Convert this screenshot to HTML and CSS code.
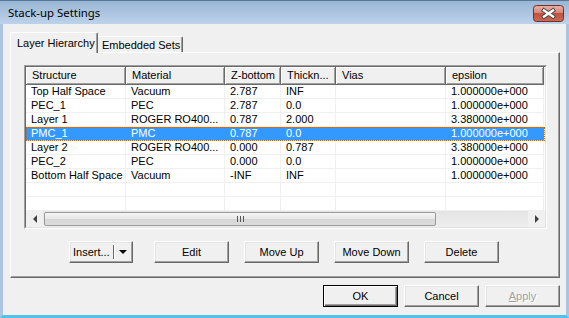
FILE: index.html
```html
<!DOCTYPE html>
<html lang="en">
<head>
    <meta charset="UTF-8">
    <title>Stack-up Settings</title>
    <link rel="stylesheet" href="styles.css">
</head>
<body>
    <div class="window">
        <div class="titlebar">
            <span class="title">Stack-up Settings</span>
            <button class="close-btn" aria-label="Close">
                <svg width="31" height="17" viewBox="0 0 31 17">
                    <defs>
                        <linearGradient id="closeGrad" x1="0" y1="0" x2="0" y2="1">
                            <stop offset="0" stop-color="#eab0a4"/>
                            <stop offset="0.45" stop-color="#d8887a"/>
                            <stop offset="0.5" stop-color="#c4513d"/>
                            <stop offset="1" stop-color="#cd6a55"/>
                        </linearGradient>
                    </defs>
                    <rect x="0.5" y="0.5" width="30" height="16" rx="3" fill="url(#closeGrad)" stroke="#6f3229"/>
                    <path d="M11 5.5 L20 11.5 M20 5.5 L11 11.5" stroke="#4a4a4a" stroke-width="4.4" stroke-linecap="square"/>
                    <path d="M11 5.5 L20 11.5 M20 5.5 L11 11.5" stroke="#ffffff" stroke-width="2.4" stroke-linecap="square"/>
                </svg>
            </button>
        </div>

        <div class="frame">
            <div class="tabs">
                <div class="tab active">Layer Hierarchy</div>
                <div class="tab">Embedded Sets</div>
            </div>

            <div class="tab-panel">
                <div class="listview">
                    <div class="list-inner">
                        <div class="list-header">
                            <div class="hcell">Structure</div>
                            <div class="hcell">Material</div>
                            <div class="hcell">Z-bottom</div>
                            <div class="hcell">Thickn...</div>
                            <div class="hcell">Vias</div>
                            <div class="hcell">epsilon</div>
                        </div>

                        <div class="row">
                            <div class="cell">Top Half Space</div>
                            <div class="cell">Vacuum</div>
                            <div class="cell">2.787</div>
                            <div class="cell">INF</div>
                            <div class="cell"></div>
                            <div class="cell">1.000000e+000</div>
                        </div>
                        <div class="row">
                            <div class="cell">PEC_1</div>
                            <div class="cell">PEC</div>
                            <div class="cell">2.787</div>
                            <div class="cell">0.0</div>
                            <div class="cell"></div>
                            <div class="cell">1.000000e+000</div>
                        </div>
                        <div class="row">
                            <div class="cell">Layer 1</div>
                            <div class="cell">ROGER RO400...</div>
                            <div class="cell">0.787</div>
                            <div class="cell">2.000</div>
                            <div class="cell"></div>
                            <div class="cell">3.380000e+000</div>
                        </div>
                        <div class="row selected">
                            <div class="cell">PMC_1</div>
                            <div class="cell">PMC</div>
                            <div class="cell">0.787</div>
                            <div class="cell">0.0</div>
                            <div class="cell"></div>
                            <div class="cell">1.000000e+000</div>
                        </div>
                        <div class="row">
                            <div class="cell">Layer 2</div>
                            <div class="cell">ROGER RO400...</div>
                            <div class="cell">0.000</div>
                            <div class="cell">0.787</div>
                            <div class="cell"></div>
                            <div class="cell">3.380000e+000</div>
                        </div>
                        <div class="row">
                            <div class="cell">PEC_2</div>
                            <div class="cell">PEC</div>
                            <div class="cell">0.000</div>
                            <div class="cell">0.0</div>
                            <div class="cell"></div>
                            <div class="cell">1.000000e+000</div>
                        </div>
                        <div class="row">
                            <div class="cell">Bottom Half Space</div>
                            <div class="cell">Vacuum</div>
                            <div class="cell">-INF</div>
                            <div class="cell">INF</div>
                            <div class="cell"></div>
                            <div class="cell">1.000000e+000</div>
                        </div>
                        <div class="row">
                            <div class="cell"></div><div class="cell"></div><div class="cell"></div>
                            <div class="cell"></div><div class="cell"></div><div class="cell"></div>
                        </div>
                        <div class="row">
                            <div class="cell"></div><div class="cell"></div><div class="cell"></div>
                            <div class="cell"></div><div class="cell"></div><div class="cell"></div>
                        </div>

                        <div class="hscroll">
                            <div class="scroll-btn"><span class="arrow-left"></span></div>
                            <div class="track">
                                <div class="thumb"><span class="grip"></span></div>
                            </div>
                            <div class="scroll-btn"><span class="arrow-right"></span></div>
                        </div>
                    </div>
                </div>

                <div class="actions">
                    <button class="btn split">
                        <span class="split-label">Insert...</span>
                        <span class="split-sep"></span>
                        <span class="split-arrow"></span>
                    </button>
                    <button class="btn">Edit</button>
                    <button class="btn">Move Up</button>
                    <button class="btn">Move Down</button>
                    <button class="btn">Delete</button>
                </div>
            </div>

            <div class="dialog-buttons">
                <button class="btn default">OK</button>
                <button class="btn">Cancel</button>
                <button class="btn disabled"><span><u>A</u>pply</span></button>
            </div>
        </div>
    </div>
</body>
</html>
```

FILE: styles.css
```css
body {
    margin: 0;
    font-family: "Liberation Sans", Arial, sans-serif;
    font-size: 11px;
    color: #000;
    background: #f0f0f0;
}

.window {
    width: 569px;
    height: 318px;
    display: flex;
    flex-direction: column;
    background: #f0f0f0;
}

/* title bar */
.titlebar {
    height: 24px;
    box-sizing: border-box;
    border-top: 1px solid #5b7796;
    background: linear-gradient(#9ab6d5, #bcd2ea);
    display: flex;
    align-items: flex-start;
    justify-content: space-between;
    padding: 0 5px 0 8px;
}

.title {
    font-family: "Noto Sans", sans-serif;
    font-size: 11.4px;
    line-height: 16px;
    margin-top: 4px;
}

.close-btn {
    margin-top: 4px;
    padding: 0;
    border: none;
    background: none;
    width: 31px;
    height: 17px;
}

.close-btn svg {
    display: block;
}

/* client frame */
.frame {
    flex: 1;
    display: flex;
    flex-direction: column;
    border-style: solid;
    border-width: 0 3px 3px 3px;
    border-color: #a9c5e3 #a9c5e3 #4fc3ea #a9c5e3;
    padding: 8px 6px 8px 7px;
}

/* tabs */
.tabs {
    display: flex;
    align-items: flex-end;
    height: 20px;
}

.tab {
    box-sizing: border-box;
    width: 85px;
    height: 16px;
    padding-left: 4px;
    display: flex;
    align-items: center;
    background: #f0f0f0;
    border-top: 1px solid #fff;
    border-right: 1px solid #696969;
    box-shadow: inset -1px 0 #a0a0a0;
    border-radius: 0 2px 0 0;
    white-space: nowrap;
}

.tab.active {
    position: relative;
    z-index: 1;
    width: 88px;
    height: 21px;
    margin-bottom: -1px;
    padding-left: 6px;
    border-left: 1px solid #fff;
    border-radius: 2px 2px 0 0;
}

.tab-panel {
    height: 226px;
    box-sizing: border-box;
    border-top: 1px solid #fff;
    border-left: 1px solid #fff;
    border-right: 1px solid #696969;
    border-bottom: 1px solid #696969;
    box-shadow: inset -1px -1px #a0a0a0;
    padding: 12px 12px 0 13px;
    display: flex;
    flex-direction: column;
}

/* list view */
.listview {
    width: 523px;
    height: 164px;
    box-sizing: border-box;
    border: 1px solid;
    border-color: #a0a0a0 #fff #fff #a0a0a0;
}

.list-inner {
    height: 100%;
    box-sizing: border-box;
    border: 1px solid;
    border-color: #696969 #e3e3e3 #e3e3e3 #696969;
    background: #fff;
    display: flex;
    flex-direction: column;
}

.list-header,
.row {
    display: grid;
    grid-template-columns: 100px 99px 56px 55px 110px 98px;
}

.list-header {
    height: 18px;
    background: #f0f0f0;
}

.hcell {
    box-sizing: border-box;
    border-right: 1px solid #696969;
    border-bottom: 1px solid #696969;
    box-shadow: inset 1px 1px #fff, inset -1px -1px #a0a0a0;
    padding-left: 6px;
    line-height: 17px;
    white-space: nowrap;
    overflow: hidden;
}

.row {
    height: 14px;
}

.cell {
    box-sizing: border-box;
    border-right: 1px solid #f0f0f0;
    border-bottom: 1px solid #f0f0f0;
    padding-left: 5px;
    line-height: 13px;
    white-space: nowrap;
    overflow: hidden;
}

.row.selected {
    outline: 1px dotted #cc6600;
    outline-offset: -1px;
}

.row.selected .cell {
    background: #3399ff;
    border-right-color: #3399ff;
    color: #fff;
}

/* horizontal scrollbar */
.hscroll {
    margin-top: auto;
    height: 16px;
    display: flex;
    background: #f0f0f0;
}

.scroll-btn {
    width: 17px;
    display: flex;
    align-items: center;
    justify-content: center;
}

.arrow-left {
    border-right: 4px solid #404040;
    border-top: 4px solid transparent;
    border-bottom: 4px solid transparent;
}

.arrow-right {
    border-left: 4px solid #404040;
    border-top: 4px solid transparent;
    border-bottom: 4px solid transparent;
}

.track {
    flex: 1;
    background: linear-gradient(#e4e4e4, #eeeeee);
    display: flex;
    padding: 1px 0;
}

.thumb {
    width: 392px;
    margin-left: 1px;
    box-sizing: border-box;
    border: 1px solid #9a9a9a;
    border-radius: 2px;
    background: linear-gradient(#f6f6f6, #e6e6e6 50%, #d6d6d6 52%, #dcdcdc);
    display: flex;
    align-items: center;
    justify-content: center;
}

.grip {
    width: 1px;
    height: 6px;
    margin-right: 6px;
    background: #555;
    box-shadow: 3px 0 #555, 6px 0 #555;
}

/* buttons */
.btn {
    box-sizing: border-box;
    width: 75px;
    height: 22px;
    padding: 0;
    background: #f0f0f0;
    border: 1px solid;
    border-color: #fff #696969 #696969 #fff;
    box-shadow: inset -1px -1px #a0a0a0, inset 1px 1px #e3e3e3;
    font-family: "Liberation Sans", Arial, sans-serif;
    font-size: 11px;
    color: #000;
    display: flex;
    align-items: center;
    justify-content: center;
}

.btn.default {
    border-color: #000;
    box-shadow: inset 1px 1px #fff, inset -1px -1px #696969, inset -2px -2px #a0a0a0;
}

.btn.disabled {
    color: #a0a0a0;
    text-shadow: 1px 1px #fff;
}

.actions {
    display: flex;
    gap: 15px;
    margin-top: 12px;
    padding-left: 45px;
}

.btn.split {
    width: 64px;
    margin-right: 6px;
    justify-content: flex-start;
    padding-left: 3px;
}

.split-label {
    width: 40px;
    text-align: left;
}

.split-sep {
    width: 1px;
    height: 14px;
    background: #696969;
    box-shadow: 1px 0 #fff;
    margin-right: 5px;
}

.split-arrow {
    border-top: 4px solid #000;
    border-left: 4px solid transparent;
    border-right: 4px solid transparent;
}

.dialog-buttons {
    display: flex;
    justify-content: flex-end;
    gap: 6px;
    margin-top: 7px;
}
```
